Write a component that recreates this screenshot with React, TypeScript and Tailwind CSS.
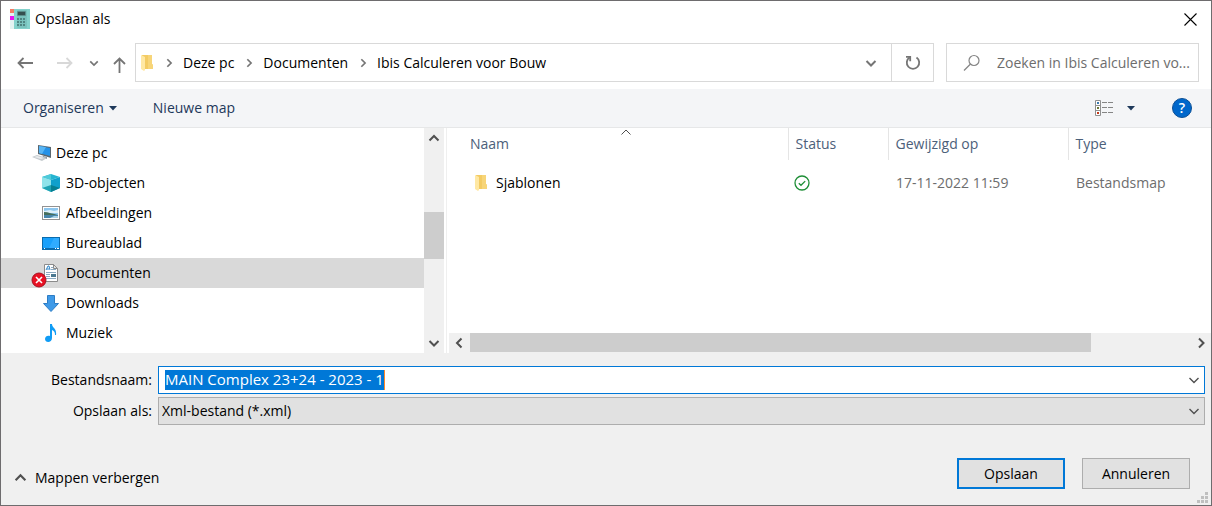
import { useEffect, useRef, type ReactNode } from 'react'

function FolderIcon() {
  return (
    <svg width="14" height="18" viewBox="0 0 14 18">
      <path d="M2 1h10v9l1 1v4H3z" fill="#f3cb63" />
      <path d="M8 1h4v9l1 1v4H8z" fill="#f7d579" />
      <path d="M1 1l4 2v13l-1 1-3-2z" fill="#ffe8a3" />
    </svg>
  )
}

function Chevron({ dir, size = 12, width = 2, color = '#505050' }: {
  dir: 'up' | 'down' | 'left' | 'right'
  size?: number
  width?: number
  color?: string
}) {
  const paths = {
    up: 'M1.500 8.500 6 4l4.500 4.500',
    down: 'M1.500 4 6 8.500 10.500 4',
    left: 'M8.500 1.500 4 6l4.500 4.500',
    right: 'M4 1.500 8.500 6 4 10.500',
  }
  return (
    <svg width={size} height={size} viewBox="0 0 12 12" fill="none" stroke={color} strokeWidth={width} className="shrink-0">
      <path d={paths[dir]} />
    </svg>
  )
}

function AppIcon() {
  return (
    <svg width="20" height="20" viewBox="0 0 20 20" className="shrink-0">
      <rect width="20" height="20" fill="#e4f3f2" />
      <rect width="4" height="4" fill="#f47c66" />
      <rect y="7" width="4" height="4" fill="#e815f0" />
      <rect x="4" width="16" height="20" fill="#84d2cc" />
      <rect x="7" y="1" width="10" height="18" rx="1" fill="#79c2bd" />
      <rect x="7" y="2" width="9" height="5" rx="1" fill="#5b8f8c" />
      <rect x="8" y="3" width="7" height="3" fill="#35504f" />
      {[9, 12, 15].map((y) =>
        [7, 10, 13].map((x) => <rect key={`${x}-${y}`} x={x} y={y} width="2" height="2" fill="#4f8582" />)
      )}
    </svg>
  )
}

const icons: Record<string, ReactNode> = {
  pc: (
    <svg width="20" height="18" viewBox="0 0 20 18">
      <path d="M6 1l13 2v11L6 10z" fill="#58666f" />
      <path d="M7 2l11 2v8L7 9z" fill="#2492e8" />
      <path d="M7 2l7 1-4 7-3-1z" fill="#57b5f5" />
      <path d="M11 12l4 1v2l-5-1z" fill="#8a949b" />
      <path d="M0 13l5-2 10 3-5 3z" fill="#c4cace" />
      <path d="M2 13l3-1 7 2-3 1z" fill="#e8ebed" />
    </svg>
  ),
  cube: (
    <svg width="18" height="18" viewBox="0 0 18 18">
      <path d="M0 3l9-3 9 3-9 3z" fill="#25b4d0" />
      <path d="M0 3l9 3v12l-9-4z" fill="#8fe3ea" />
      <path d="M18 3L9 6v12l9-4z" fill="#10a0cc" />
      <path d="M0 14l9-3v7z" fill="#1fa3b4" />
      <path d="M9 11l9 3-9 4z" fill="#077f91" />
      <path d="M0 3l9-3v6z" fill="#4fcad9" />
    </svg>
  ),
  picture: (
    <svg width="18" height="14" viewBox="0 0 18 14">
      <rect x=".5" y=".5" width="17" height="13" fill="#fff" stroke="#929292" />
      <rect x="2" y="2" width="14" height="10" fill="#8dc6ee" />
      <path d="M2 5l6-1 4 1 4-1v3H2z" fill="#dceffa" />
      <path d="M2 6c4 0 9 2 14 3v1H2z" fill="#456e5b" />
      <path d="M2 9h14v3H2z" fill="#4785aa" />
      <path d="M8 12l4-2h4v2z" fill="#a8d1e4" />
    </svg>
  ),
  desktop: (
    <svg width="18" height="13" viewBox="0 0 18 13">
      <rect width="18" height="13" fill="#0a6bad" />
      <path d="M1 1h16v10H1z" fill="#18a0fb" />
      <path d="M12 1h5v10H7z" fill="#30acff" />
      <path d="M2 11h1v1H2zM13 11h1v1h-1zM15 11h2v1h-2z" fill="#fff" />
    </svg>
  ),
  document: (
    <svg width="14" height="18" viewBox="0 0 14 18">
      <path d="M.5.500h9l4 4v13H.500z" fill="#fff" stroke="#8b8b8b" />
      <path d="M9.500.500v4h4z" fill="#e3e3e3" stroke="#8b8b8b" />
      <path d="M2 6l2-4h1l1 4M3 5h2" fill="none" stroke="#2b84c8" />
      <path d="M7 3.500h2M7 5.500h5M2 8.500h10M2 10.500h4M2 12.500h4M2 14.500h10" stroke="#8cabc2" />
      <rect x="7" y="10" width="5" height="3" fill="#4b7890" />
    </svg>
  ),
  download: (
    <svg width="16" height="17" viewBox="0 0 16 17">
      <path d="M4.500.500h7v8h4L8 16.500.500 8.500h4z" fill="#3f9ae8" stroke="#2d7cc4" />
    </svg>
  ),
  music: (
    <svg width="12" height="18" viewBox="0 0 12 18">
      <path d="M5 0h2c0 4 5 4 4 11h-1c0-3-1-4-3-5v8c0 5-7 5-7 1 0-3 3-4 5-3z" fill="#109cf5" />
    </svg>
  ),
}

const folders = [
  { name: '3D-objecten', icon: 'cube' },
  { name: 'Afbeeldingen', icon: 'picture' },
  { name: 'Bureaublad', icon: 'desktop' },
  { name: 'Documenten', icon: 'document', selected: true, error: true },
  { name: 'Downloads', icon: 'download' },
  { name: 'Muziek', icon: 'music' },
]

const crumbs = ['Deze pc', 'Documenten', 'Ibis Calculeren voor Bouw']

function TitleBar() {
  return (
    <header className="flex h-[42px] items-start justify-between pl-[9px] pr-[14px] pt-2">
      <div className="flex items-center gap-[5px]">
        <AppIcon />
        <h1>Opslaan als</h1>
      </div>
      <button aria-label="Sluiten" className="mt-1">
        <svg width="13" height="13" viewBox="0 0 13 13" stroke="#000" strokeWidth="1.100">
          <path d="M.5.500l12 12M12.500.500l-12 12" />
        </svg>
      </button>
    </header>
  )
}

function AddressBar() {
  return (
    <nav className="flex items-center pl-4 pr-3">
      <button aria-label="Vorige">
        <svg width="16" height="12" viewBox="0 0 16 12" fill="none" stroke="#757575" strokeWidth="1.800">
          <path d="M16 6H1.500M6.500 1l-5 5 5 5" />
        </svg>
      </button>
      <button aria-label="Volgende" className="ml-6">
        <svg width="16" height="12" viewBox="0 0 16 12" fill="none" stroke="#d8d8d8" strokeWidth="1.800">
          <path d="M0 6h14.500M9.500 1l5 5-5 5" />
        </svg>
      </button>
      <button aria-label="Recente locaties" className="ml-4">
        <Chevron dir="down" size={10} color="#757575" />
      </button>
      <button aria-label="Omhoog" className="ml-[14px] mt-1">
        <svg width="13" height="16" viewBox="0 0 13 16" fill="none" stroke="#757575" strokeWidth="1.800">
          <path d="M6.500 16V1.500M1 7l5.500-5.500L12 7" />
        </svg>
      </button>
      <div className="ml-[9px] flex h-[39px] flex-1 items-center border border-[#d9d9d9]">
        <div className="flex flex-1 items-center pl-1">
          <FolderIcon />
          {crumbs.map((crumb) => (
            <div key={crumb} className="flex items-center">
              <span className="flex w-[29px] justify-center">
                <Chevron dir="right" size={10} color="#757575" />
              </span>
              <button>{crumb}</button>
            </div>
          ))}
        </div>
        <button aria-label="Vorige locaties" className="mr-[14px]">
          <Chevron dir="down" color="#757575" />
        </button>
        <button aria-label="Vernieuwen" className="flex h-full w-[42px] items-center justify-center border-l border-[#d9d9d9]">
          <svg width="16" height="16" viewBox="0 0 16 16" fill="none" stroke="#757575" strokeWidth="1.800">
            <path d="M11.500 2.500a6.200 6.200 0 1 1-7 0" />
            <path d="M1 1.800h4.200v4.400" />
          </svg>
        </button>
      </div>
      <label className="ml-3 flex h-[39px] w-[253px] items-center border border-[#d9d9d9] pl-4">
        <svg width="18" height="18" viewBox="0 0 18 18" fill="none" stroke="#858585" strokeWidth="1.200">
          <circle cx="11" cy="6.500" r="5" />
          <path d="M7.500 10L1 16.500" />
        </svg>
        <input
          type="text"
          aria-label="Zoeken"
          placeholder="Zoeken in Ibis Calculeren vo..."
          className="ml-4 min-w-0 flex-1 outline-none placeholder:text-[#6d6d6d]"
        />
      </label>
    </nav>
  )
}

function Toolbar() {
  return (
    <div className="mt-[7px] flex h-[39px] items-center border-b border-[#e6e7e8] bg-[#f4f5f7] pl-[22px] pr-[19px] text-[#1e395b]">
      <button className="flex items-center gap-[5px]">
        Organiseren
        <svg width="8" height="5" viewBox="0 0 8 5"><path d="M0 0h8L4 4.500z" fill="#1e395b" /></svg>
      </button>
      <button className="ml-9">Nieuwe map</button>
      <button aria-label="Weergave" className="ml-auto">
        <svg width="18" height="16" viewBox="0 0 18 16" fill="none">
          <path d="M.500.500h5v15h-5zM.500 5.500h5M.500 10.500h5" fill="#fff" stroke="#8f8f8f" />
          <path d="M2 2h2v2H2z" fill="#3978ad" />
          <path d="M2 7h2v2H2z" fill="#6a7736" />
          <path d="M2 12h2v2H2z" fill="#c2381b" />
          <path d="M7 2.500h5M13 2.500h5M7 7.500h5M13 7.500h5M7 12.500h5M13 12.500h5" stroke="#858585" />
        </svg>
      </button>
      <button aria-label="Weergave wijzigen" className="ml-[14px]">
        <svg width="8" height="5" viewBox="0 0 8 5"><path d="M0 0h8L4 4.500z" fill="#1e395b" /></svg>
      </button>
      <button aria-label="Help" className="ml-[37px] flex size-5 items-center justify-center rounded-full border border-[#0b4f95] bg-[#0067cb] text-sm font-semibold leading-none text-white">
        ?
      </button>
    </div>
  )
}

function FolderTree() {
  return (
    <aside className="flex w-[446px] shrink-0 border-r border-[#efefef]">
      <ul className="flex-1 pb-[5px] pt-[10px]">
        <li className="flex h-[30px] items-center pl-[31px]">
          {icons.pc}
          <span className="ml-1">Deze pc</span>
        </li>
        {folders.map((folder) => (
          <li
            key={folder.name}
            className={`flex h-[30px] items-center pl-10 ${folder.selected ? 'bg-[#d9d9d9]' : ''}`}
          >
            <span className="relative flex w-5 justify-center">
              {icons[folder.icon]}
              {folder.error && (
                <svg width="16" height="16" viewBox="0 0 16 16" className="absolute -left-[10px] top-2">
                  <circle cx="8" cy="8" r="7" fill="#e81123" stroke="#a80f20" />
                  <path d="M5 5l6 6M11 5l-6 6" stroke="#fff" strokeWidth="1.600" />
                </svg>
              )}
            </span>
            <span className="ml-[5px]">{folder.name}</span>
          </li>
        ))}
      </ul>
      <div className="mr-[2px] flex w-5 flex-col items-center bg-[#f0f0f0] pb-1 pt-1">
        <Chevron dir="up" />
        <div className="mt-[68px] h-[47px] w-full bg-[#cdcdcd]" />
        <div className="mt-auto flex"><Chevron dir="down" /></div>
      </div>
    </aside>
  )
}

function FileList() {
  return (
    <main className="relative flex min-w-0 flex-1 flex-col pl-[2px]">
      {/* sorteerpijl boven de kolom Naam */}
      <span className="absolute left-[173px] top-[-2px]">
        <Chevron dir="up" width={1} />
      </span>
      <table className="w-full table-fixed text-left">
        <colgroup>
          <col className="w-[339px]" />
          <col className="w-[100px]" />
          <col className="w-[180px]" />
          <col />
        </colgroup>
        <thead className="text-[#4c607a]">
          <tr className="h-8">
            <th className="border-r border-[#e5e5e5] pl-[21px] font-normal">Naam</th>
            <th className="border-r border-[#e5e5e5] pl-[7px] font-normal">Status</th>
            <th className="border-r border-[#e5e5e5] pl-[7px] font-normal">Gewijzigd op</th>
            <th className="pl-[7px] font-normal">Type</th>
          </tr>
        </thead>
        <tbody className="text-[#6d6d6d]">
          <tr className="h-[46px]">
            <td className="pl-[25px] text-black">
              <span className="flex items-center gap-2">
                <FolderIcon />
                Sjablonen
              </span>
            </td>
            <td className="pl-[6px]">
              <svg width="16" height="16" viewBox="0 0 16 16" fill="none" stroke="#1e8e36" strokeWidth="1.300">
                <circle cx="8" cy="8" r="7" />
                <path d="M4.800 8.200l2.200 2.100 4.200-4.200" />
              </svg>
            </td>
            <td className="pl-2">17-11-2022 11:59</td>
            <td className="pl-2">Bestandsmap</td>
          </tr>
        </tbody>
      </table>
      <div className="mt-auto flex h-5 items-center bg-[#f0f0f0] pl-1 pr-1">
        <Chevron dir="left" />
        <div className="ml-[5px] flex-1 self-stretch pb-px">
          <div className="h-full w-6/7 bg-[#cdcdcd]" />
        </div>
        <Chevron dir="right" />
      </div>
    </main>
  )
}

function SavePanel() {
  const nameRef = useRef<HTMLInputElement>(null)

  useEffect(() => {
    nameRef.current?.focus()
    nameRef.current?.select()
  }, [])

  return (
    <form className="flex flex-1 flex-col bg-[#f0f0f0] pt-[13px]" onSubmit={(e) => e.preventDefault()}>
      <div className="grid grid-cols-[151px_1fr] items-center gap-x-[6px] gap-y-[3px] pr-[6px]">
        <label htmlFor="filename" className="text-right">Bestandsnaam:</label>
        <div className="flex h-7 items-center border border-[#0078d7] bg-white pl-[6px] pr-1">
          <input
            id="filename"
            ref={nameRef}
            defaultValue="MAIN Complex 23+24 - 2023 - 1"
            className="field-sizing-content h-5 text-[15px] outline-none selection:bg-[#0078d7] selection:text-white"
          />
          <span className="h-5 w-px shrink-0 bg-[#ff8728]" />
          <button type="button" aria-label="Eerdere namen" className="ml-auto">
            <Chevron dir="down" width={1.4} />
          </button>
        </div>
        <label htmlFor="filetype" className="text-right">Opslaan als:</label>
        <div className="relative flex">
          <select id="filetype" className="h-7 w-full appearance-none border border-[#adadad] bg-[#e1e1e1] pl-[3px]">
            <option>Xml-bestand (*.xml)</option>
          </select>
          <span className="pointer-events-none absolute right-[5px] top-2">
            <Chevron dir="down" width={1.4} />
          </span>
        </div>
      </div>
      <div className="mt-[33px] flex items-center pl-[13px] pr-[21px]">
        <button type="button" className="mt-2 flex items-center gap-2">
          <Chevron dir="up" size={13} />
          Mappen verbergen
        </button>
        <button className="ml-auto h-[31px] w-[108px] border-2 border-[#0078d7] bg-[#e1e1e1]">Opslaan</button>
        <button type="button" className="ml-[17px] h-[31px] w-[108px] border border-[#adadad] bg-[#e1e1e1]">
          Annuleren
        </button>
      </div>
      <svg width="11" height="11" viewBox="0 0 11 11" className="mb-[2px] ml-auto mr-[3px] mt-auto">
        <path d="M8 0h3v3H8zM4 4h3v3H4zM8 4h3v3H8zM0 8h3v3H0zM4 8h3v3H4zM8 8h3v3H8z" fill="#bfbfbf" />
      </svg>
    </form>
  )
}

export default function App() {
  return (
    <div className="flex min-h-screen flex-col border border-[#6e6c6e] bg-white font-['Open_Sans','Noto_Sans',sans-serif] text-sm text-black">
      <TitleBar />
      <AddressBar />
      <Toolbar />
      <div className="flex">
        <FolderTree />
        <FileList />
      </div>
      <SavePanel />
    </div>
  )
}
